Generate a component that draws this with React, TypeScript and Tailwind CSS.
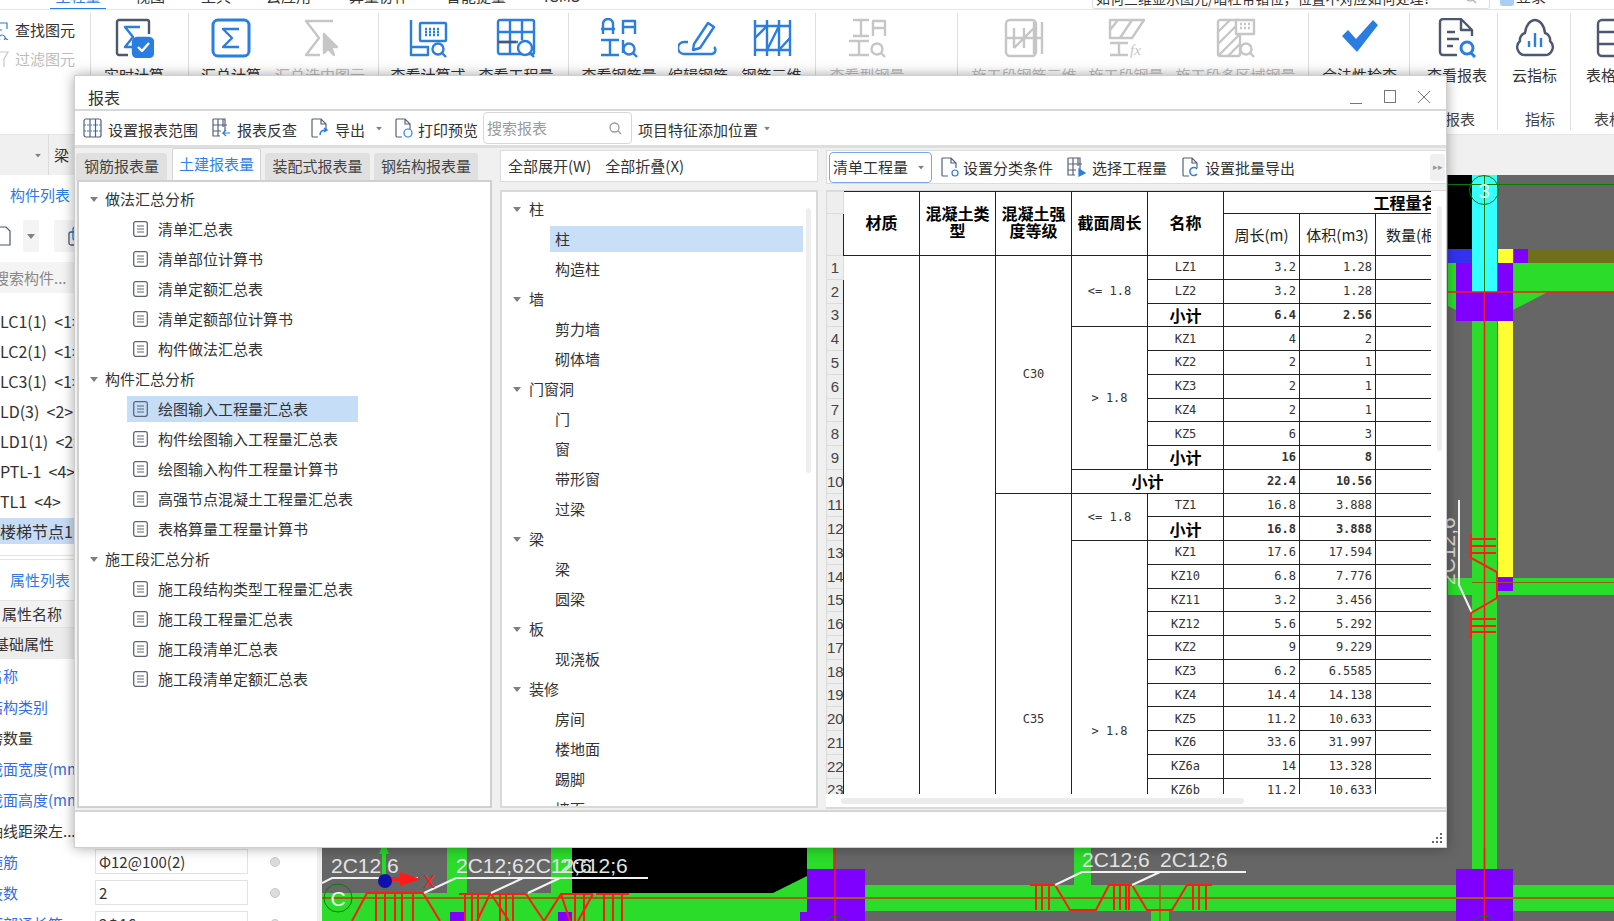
import type { ReactNode } from "react";

const BLUE = "#2a7de1";
const GRAY = "#c6c6c6";
const SLATE = "#4b5870";

/* 40x40 ribbon pictogram */
function Glyph({ children, color = BLUE }: { children: ReactNode; color?: string }) {
  return (
    <svg width="40" height="40" viewBox="0 0 40 40" fill="none" stroke={color} strokeWidth="2.4" strokeLinejoin="round">
      {children}
    </svg>
  );
}

const MiniLens = ({ c = BLUE }: { c?: string }) => (
  <>
    <circle cx="30" cy="31" r="5.5" stroke={c} />
    <path d="M34 35l4 4" stroke={c} />
  </>
);

const ribbonGlyphs: Record<string, ReactNode> = {
  live: (
    <Glyph color={SLATE}>
      <path d="M14 37H5a2 2 0 0 1-2-2V4a2 2 0 0 1 2-2h28a2 2 0 0 1 2 2v12" />
      <path d="M26 9H11l8 10-8 10h9" stroke={BLUE} />
      <rect x="19" y="20" width="20" height="19" rx="4" fill={BLUE} stroke={BLUE} />
      <path d="M24 29l4 4 7-8" stroke="#fff" />
    </Glyph>
  ),
  sum: (
    <Glyph>
      <rect x="2" y="2" width="36" height="36" rx="5" strokeWidth="3" />
      <path d="M28 11H12l9 9-9 9h16" />
    </Glyph>
  ),
  sumPart: (
    <Glyph color={GRAY}>
      <path d="M33 3H6l13 17L6 37h14" />
      <path d="M24 16l13 13h-6l3 8-6-6-4 4z" fill={GRAY} />
    </Glyph>
  ),
  formula: (
    <Glyph>
      <path d="M3 2v35h17v-8H3" />
      <rect x="12" y="5" width="26" height="18" rx="1" />
      <path d="M17 11h16M17 14h16M17 17h16" strokeDasharray="2 2" />
      <MiniLens />
    </Glyph>
  ),
  quantity: (
    <Glyph>
      <rect x="2" y="2" width="36" height="34" rx="2" />
      <path d="M2 14h36M2 24h20M14 2v34M26 2v20" stroke={BLUE} />
      <path d="M2 24h18" stroke={SLATE} />
      <circle cx="29" cy="30" r="7" fill="#fff" />
      <path d="M34 35l4 4" />
    </Glyph>
  ),
  steel: (
    <Glyph>
      <path d="M4 16V6a5 5 0 0 1 10 0v10M2 11h14M24 16V3h12v13M24 9h12M2 22h18M11 22v15M2 37h18M24 22v13" />
      <MiniLens />
    </Glyph>
  ),
  edit: (
    <Glyph>
      <path d="M16 26L30 5l6 4-14 21-7 2z" />
      <path d="M10 24H6a5 5 0 0 0 0 12h28a4 4 0 0 0 2-7" />
    </Glyph>
  ),
  rebar3d: (
    <Glyph>
      <path d="M3 2v36M15 2v36M27 2v36M38 2v36M3 8h35M3 32h35" />
      <path d="M3 20l12-12M27 32l11-12M15 32l12-24" />
    </Glyph>
  ),
  shape: (
    <Glyph color={GRAY}>
      <path d="M6 2h16M14 2v16M6 18h16M26 18V3h12v15M26 10h12M2 23h20M12 23v14M2 37h20" />
      <MiniLens c={GRAY} />
    </Glyph>
  ),
  segRebar: (
    <Glyph color={GRAY}>
      <rect x="2" y="2" width="30" height="36" rx="4" />
      <path d="M2 20h36M10 10v20M20 10v20M30 4v32M38 4v32M10 30l20-20" />
    </Glyph>
  ),
  segSteel: (
    <Glyph color={GRAY}>
      <path d="M4 2h34L26 20H4zM14 20L26 2M4 12l8-10" />
      <path d="M4 25h18M13 25v12M4 37h18" />
      <text x="24" y="37" fontSize="15" fontStyle="italic" fill={GRAY} stroke="none" fontFamily="Liberation Serif, serif">fx</text>
    </Glyph>
  ),
  segArea: (
    <Glyph color={GRAY}>
      <rect x="2" y="2" width="22" height="36" rx="2" />
      <path d="M2 14L14 2M2 26L24 4M2 38l22-22M12 38l12-12" />
      <rect x="20" y="2" width="18" height="14" fill="#fff" />
      <path d="M24 6h10M24 10h10" strokeDasharray="2 2" />
      <MiniLens c={GRAY} />
    </Glyph>
  ),
  check: (
    <svg width="40" height="40" viewBox="0 0 40 40" fill={BLUE}>
      <path d="M2 18l6-6 8 9L33 2l5 5-21 27z" />
    </svg>
  ),
  report: (
    <Glyph color={SLATE}>
      <path d="M20 37H6a3 3 0 0 1-3-3V4a3 3 0 0 1 3-3h18l11 11v6M24 1v11h11" />
      <path d="M10 14h8M10 21h12M10 28h6" />
      <circle cx="30" cy="30" r="6" stroke={BLUE} strokeWidth="3" />
      <path d="M34 35l4 4" stroke={BLUE} strokeWidth="3" />
    </Glyph>
  ),
  cloud: (
    <Glyph color={SLATE}>
      <path d="M11 37a8 8 0 0 1-6-14 7 7 0 0 1 5-8C11 6 16 2 20 2s9 4 10 13a7 7 0 0 1 5 8 8 8 0 0 1-6 14z" />
      <path d="M14 23v6M20 15v14M26 20v9" stroke={BLUE} />
    </Glyph>
  ),
  table: (
    <Glyph color={SLATE}>
      <rect x="2" y="2" width="36" height="36" rx="4" />
      <path d="M2 14h36M2 26h36M20 2v36" />
    </Glyph>
  ),
};

const ribbonGroups = [
  { w: 98, items: [{ w: 86, g: "live", t: "实时计算" }] },
  {
    w: 190,
    items: [
      { w: 84, g: "sum", t: "汇总计算" },
      { w: 94, g: "sumPart", t: "汇总选中图元", off: true },
    ],
  },
  {
    w: 190,
    items: [
      { w: 98, g: "formula", t: "查看计算式" },
      { w: 78, g: "quantity", t: "查看工程量" },
    ],
  },
  {
    w: 247,
    items: [
      { w: 100, g: "steel", t: "查看钢筋量" },
      { w: 58, g: "edit", t: "编辑钢筋" },
      { w: 89, g: "rebar3d", t: "钢筋三维" },
    ],
  },
  { w: 142, items: [{ w: 102, g: "shape", t: "查看型钢量", off: true }] },
  {
    w: 351,
    items: [
      { w: 132, g: "segRebar", t: "施工段钢筋三维", off: true },
      { w: 72, g: "segSteel", t: "施工段钢量", off: true },
      { w: 147, g: "segArea", t: "施工段多区域钢量", off: true },
    ],
  },
  { w: 101, items: [{ w: 101, g: "check", t: "合法性检查" }] },
  { w: 88, label: "报表", pl: 35, items: [{ w: 94, g: "report", t: "查看报表" }] },
  { w: 73, label: "指标", pl: 27, items: [{ w: 73, g: "cloud", t: "云指标" }] },
  { w: 90, label: "表格", pl: 23, items: [{ w: 90, g: "table", t: "表格算量" }] },
];

const memberRows = ["LC1(1) <1>", "LC2(1) <1>", "LC3(1) <1>", "LD(3) <2>", "LD1(1) <2>", "PTL-1 <4>", "TL1 <4>", "楼梯节点1"];

const propRows = [
  { n: "名称", blue: true },
  { n: "结构类别", blue: true },
  { n: "跨数量" },
  { n: "截面宽度(mm)", blue: true },
  { n: "截面高度(mm)", blue: true },
  { n: "轴线距梁左边线距离", short: "轴线距梁左..." },
  { n: "箍筋", blue: true, v: "Φ12@100(2)" },
  { n: "肢数", blue: true, v: "2" },
  { n: "下部通长筋", blue: true, v: "2Φ16" },
];

const reportTree = [
  { g: "做法汇总分析", items: ["清单汇总表", "清单部位计算书", "清单定额汇总表", "清单定额部位计算书", "构件做法汇总表"] },
  { g: "构件汇总分析", items: ["绘图输入工程量汇总表", "构件绘图输入工程量汇总表", "绘图输入构件工程量计算书", "高强节点混凝土工程量汇总表", "表格算量工程量计算书"] },
  { g: "施工段汇总分析", items: ["施工段结构类型工程量汇总表", "施工段工程量汇总表", "施工段清单汇总表", "施工段清单定额汇总表"] },
];

const memberTree = [
  { g: "柱", items: ["柱", "构造柱"] },
  { g: "墙", items: ["剪力墙", "砌体墙"] },
  { g: "门窗洞", items: ["门", "窗", "带形窗", "过梁"] },
  { g: "梁", items: ["梁", "圆梁"] },
  { g: "板", items: ["现浇板"] },
  { g: "装修", items: ["房间", "楼地面", "踢脚", "墙面"] },
];

const tableRows: { name?: string; a?: string; b?: string; bold?: boolean }[] = [
  { name: "LZ1", a: "3.2", b: "1.28" },
  { name: "LZ2", a: "3.2", b: "1.28" },
  { name: "小计", a: "6.4", b: "2.56", bold: true },
  { name: "KZ1", a: "4", b: "2" },
  { name: "KZ2", a: "2", b: "1" },
  { name: "KZ3", a: "2", b: "1" },
  { name: "KZ4", a: "2", b: "1" },
  { name: "KZ5", a: "6", b: "3" },
  { name: "小计", a: "16", b: "8", bold: true },
  { name: "小计", a: "22.4", b: "10.56", bold: true },
  { name: "TZ1", a: "16.8", b: "3.888" },
  { name: "小计", a: "16.8", b: "3.888", bold: true },
  { name: "KZ1", a: "17.6", b: "17.594" },
  { name: "KZ10", a: "6.8", b: "7.776" },
  { name: "KZ11", a: "3.2", b: "3.456" },
  { name: "KZ12", a: "5.6", b: "5.292" },
  { name: "KZ2", a: "9", b: "9.229" },
  { name: "KZ3", a: "6.2", b: "6.5585" },
  { name: "KZ4", a: "14.4", b: "14.138" },
  { name: "KZ5", a: "11.2", b: "10.633" },
  { name: "KZ6", a: "33.6", b: "31.997" },
  { name: "KZ6a", a: "14", b: "13.328" },
  { name: "KZ6b", a: "11.2", b: "10.633" },
  {},
  {},
  {},
  {},
  {},
  {},
];

function Caret({ className = "" }: { className?: string }) {
  return (
    <svg width="8" height="5" viewBox="0 0 8 5" className={`shrink-0 ${className}`}>
      <path d="M0 0h8L4 5z" fill="#808080" />
    </svg>
  );
}

function DocIcon() {
  return (
    <svg width="15" height="16" viewBox="0 0 15 16" fill="none" stroke="#5f6673" className="shrink-0">
      <rect x=".7" y=".7" width="13.600" height="14.600" rx="2" strokeWidth="1.300" />
      <path d="M4 5h7M4 8h7M4 11h7" />
    </svg>
  );
}

/* small dialog toolbar pictograms */
function ToolGrid({ accent }: { accent: ReactNode }) {
  return (
    <svg width="20" height="20" viewBox="0 0 20 20" fill="none" stroke="#56617a" strokeWidth="1.200" className="shrink-0">
      <path d="M2 1h12v12M2 1v17h7M2 7h14M2 13h8M7 1v17M12 1v8" />
      {accent}
    </svg>
  );
}

function ToolDoc({ accent }: { accent: ReactNode }) {
  return (
    <svg width="20" height="20" viewBox="0 0 20 20" fill="none" stroke="#56617a" strokeWidth="1.200" className="shrink-0">
      <path d="M9 19H4a1 1 0 0 1-1-1V2a1 1 0 0 1 1-1h8l5 5v5M12 1v5h5" />
      {accent}
    </svg>
  );
}

const CAD_GREEN = "#2bdc2b";
const CAD_PURPLE = "#8000ff";

function Leader({ d }: { d: string }) {
  return <path d={d} stroke="#f2f2f2" strokeWidth="2" fill="none" />;
}

function CadLabel({ x, y }: { x: number; y: number }) {
  return (
    <text x={x} y={y} fontSize="21" fill="#e4e4e4" fontFamily="Liberation Sans, sans-serif">
      2C12;6
    </text>
  );
}

function CadCanvas() {
  return (
    <svg width="1292" height="746" className="block">
      <g transform="translate(-322 -175)">
        {/* right column */}
        <rect x="1448" y="175" width="24" height="74" fill="#000" />
        <rect x="1472" y="175" width="25" height="117" fill="#33ffff" />
        <rect x="1448" y="249" width="24" height="14" fill="#3333ee" />
        <rect x="1498" y="249" width="15" height="14" fill="#ffff33" />
        <rect x="1514" y="249" width="14" height="14" fill={CAD_PURPLE} />
        <rect x="1528" y="249" width="86" height="14" fill="#70701c" />
        <path d="M1448 263h8v47l-8-4z" fill={CAD_GREEN} />
        <rect x="1513" y="263" width="101" height="29" fill={CAD_GREEN} />
        <path d="M1513 292h35l-35 18z" fill={CAD_GREEN} />
        <rect x="1456" y="263" width="16" height="29" fill={CAD_PURPLE} />
        <rect x="1498" y="263" width="15" height="29" fill={CAD_PURPLE} />
        <rect x="1456" y="292" width="57" height="29" fill={CAD_PURPLE} />
        <rect x="1472" y="321" width="25" height="600" fill={CAD_GREEN} />
        <rect x="1498" y="321" width="15" height="256" fill="#ffff33" />
        <rect x="1448" y="578" width="24" height="17" fill={CAD_GREEN} />
        <rect x="1497" y="578" width="117" height="17" fill={CAD_GREEN} />
        <rect x="1498" y="577" width="15" height="14" fill={CAD_PURPLE} />
        <path d="M1448 184.500h166" stroke="#0a7a0a" />
        <path d="M1484.500 175v117" stroke="#0a7a0a" />
        <circle cx="1484" cy="190" r="14.500" stroke="#0a7a0a" fill="none" />
        <text x="1484" y="198" textAnchor="middle" fontSize="21" fill="#eaffff" fontFamily="Liberation Sans, sans-serif">3</text>
        <path d="M1448 292h166" stroke="#ff1a1a" strokeWidth="1.500" />
        <path d="M1484.500 292v629" stroke="#ff1a1a" strokeWidth="1.500" />
        <path d="M1472 582.500h142" stroke="#9a5a1a" />
        <Leader d="M1459 500v85l13 28" />
        <text transform="rotate(-90 1455 585)" x="1455" y="585" fontSize="21" fill="#d8d8d8" fontFamily="Liberation Sans, sans-serif">2C12;6</text>
        <g stroke="#ff1a1a" strokeWidth="2" fill="none">
          <path d="M1471 534v24l26 14v26l-26 15v26" />
          <path d="M1471 539h25M1471 546h25M1471 553h25M1471 619h25M1471 626h25M1471 632h25" />
        </g>

        {/* bottom strip, left part */}
        <rect x="447" y="848" width="20" height="46" fill={CAD_GREEN} />
        <rect x="551" y="848" width="21" height="46" fill={CAD_GREEN} />
        <rect x="572" y="848" width="235" height="46" fill="#000" />
        <rect x="322" y="893" width="485" height="28" fill={CAD_GREEN} />
        <path d="M771 894l36-18v18z" fill={CAD_GREEN} />
        <rect x="807" y="848" width="26" height="21" fill={CAD_GREEN} />
        <rect x="807" y="869" width="58" height="52" fill={CAD_PURPLE} />
        <rect x="800" y="912" width="7" height="9" fill={CAD_PURPLE} />
        <rect x="450" y="912" width="14" height="9" fill={CAD_PURPLE} />
        <rect x="558" y="912" width="14" height="9" fill={CAD_PURPLE} />
        <path d="M865 885h591v26H865z" fill={CAD_GREEN} />
        <rect x="1513" y="885" width="101" height="26" fill={CAD_GREEN} />
        <rect x="1074" y="848" width="17" height="37" fill={CAD_GREEN} />
        <rect x="1151" y="911" width="18" height="10" fill={CAD_GREEN} />
        <rect x="1456" y="869" width="57" height="52" fill={CAD_PURPLE} />
        <path d="M322 898h1292" stroke="#a0601a" strokeWidth="2" />
        <path d="M835 848v73M1484.500 848v73" stroke="#ff1a1a" strokeWidth="1.500" />
        <path d="M1160 885v36" stroke="#a0601a" strokeWidth="1.500" />
        <circle cx="835" cy="928" r="12" stroke="#0a7a0a" fill="none" />
        <circle cx="1484" cy="928" r="12" stroke="#0a7a0a" fill="none" />

        <g stroke="#ff1a1a" strokeWidth="2" fill="none">
          <path d="M352 921l15-28h56l17 28M376 893v28M385 893v28M395 893v28M402 893v28M413 893v28" />
          <path d="M459 894h67M465 894v27M472 894v27M478 894v27M490 894l-13 27M491 894l18 27M500 894v27M506 894v27M513 894v27M526 894l18 27" />
          <path d="M544 921l17-27h32M570 921l-9-27M575 894v27M584 894v27M593 894l-15 27M596 894h33M604 894v27M613 894v27M622 894v27" />
          <path d="M1030 885h25l15 25h26l13-25h23M1036 885v25M1042 885v25M1049 885v25M1114 885v25M1120 885v25M1126 885v25M1129 885v25" />
          <path d="M1132 885l15 25h25l15-25h25M1193 885v25M1199 885v25M1206 885v25" />
        </g>

        <CadLabel x={331} y={873} />
        <CadLabel x={456} y={873} />
        <CadLabel x={524} y={873} />
        <CadLabel x={560} y={873} />
        <CadLabel x={1082} y={867} />
        <CadLabel x={1160} y={867} />
        <Leader d="M322 883l10-5h86M424 893l32-15h192M491 893l32-15M528 893l32-15" />
        <Leader d="M1055 885l27-13h164M1132 885l28-13" />

        {/* axis gizmo and grid bubble */}
        <path d="M384 878v-28" stroke="#22dd22" strokeWidth="4" />
        <path d="M384 842l-5 12h10z" fill="#22dd22" />
        <path d="M384 879h22" stroke="#ff1a1a" strokeWidth="4" />
        <path d="M400 872l21 7-21 7z" fill="#ff1a1a" />
        <circle cx="385" cy="881" r="7" fill="#1010b0" />
        <text x="423" y="888" fontSize="18" fill="#ff1a1a" fontFamily="Liberation Sans, sans-serif">X</text>
        <circle cx="338" cy="898" r="14" stroke="#0a7a0a" fill="none" />
        <text x="338" y="906" textAnchor="middle" fontSize="21" fill="#e8ffe8" fontFamily="Liberation Sans, sans-serif">C</text>
      </g>
    </svg>
  );
}

function Ribbon() {
  return (
    <div className="flex h-[125px] border-b border-[#e6e6e6] bg-white">
      <div className="flex w-[90px] shrink-0 flex-col gap-[9px] pt-[10px] text-[15px] leading-[20px]">
        <div className="flex items-center gap-[6px] text-[#333]">
          <svg width="9" height="20" viewBox="0 0 9 20" fill="none" stroke={BLUE} strokeWidth="1.200" className="shrink-0">
            <path d="M0 3h7v6M0 10h2M2 15a3 3 0 1 0 .1 0M5 18l3 2" />
          </svg>
          查找图元
        </div>
        <div className="flex items-center gap-[6px] text-[#bdbdbd]">
          <svg width="9" height="20" viewBox="0 0 9 20" fill="none" stroke="#c8c8c8" strokeWidth="1.200" className="shrink-0">
            <path d="M0 3h8L4 10v8" />
          </svg>
          过滤图元
        </div>
      </div>
      {ribbonGroups.map((group) => (
        <div key={group.items[0].t} className="relative mt-[3px] h-[117px] shrink-0 border-l border-[#dedede]" style={{ width: group.w }}>
          <div className="flex">
            {group.items.map((item) => (
              <div key={item.t} className="flex shrink-0 flex-col items-center pt-[5px]" style={{ width: item.w }}>
                {ribbonGlyphs[item.g]}
                <span className={`mt-[7px] whitespace-nowrap text-[15px] leading-[20px] ${item.off ? "text-[#bdbdbd]" : "text-[#333]"}`}>{item.t}</span>
              </div>
            ))}
          </div>
          {group.label && (
            <div className="mt-[24px] text-[15px] leading-[20px] text-[#444]" style={{ paddingLeft: group.pl }}>
              {group.label}
            </div>
          )}
        </div>
      ))}
    </div>
  );
}

function TopTabs() {
  const tabs = [
    { t: "工程量", w: 56, ml: 50, on: true },
    { t: "视图", w: 30, ml: 29 },
    { t: "工具", w: 32, ml: 35 },
    { t: "云应用", w: 44, ml: 34 },
    { t: "算量协作", w: 66, ml: 36 },
    { t: "智能提量", w: 64, ml: 32 },
    { t: "IGMS", w: 44, ml: 32 },
  ];
  return (
    <div className="flex h-[10px] overflow-hidden border-b border-[#e4e4e4] bg-white">
      {tabs.map((tab) => (
        <div
          key={tab.t}
          className={`-mt-[14px] h-[24px] shrink-0 whitespace-nowrap text-center text-[15px] leading-[20px] ${tab.on ? "border-b-2 border-[#2a7de1] text-[#2a7de1]" : "text-[#333]"}`}
          style={{ width: tab.w, marginLeft: tab.ml }}
        >
          {tab.t}
        </div>
      ))}
      <div className="-mt-[13px] ml-[508px] flex h-[22px] w-[398px] shrink-0 items-center justify-between rounded-[3px] border border-[#ddd] pl-[3px] pr-[12px] text-[14px] text-[#333]">
        <span className="truncate">如何三维显示图元/暗柱带错位，位置不对应如何处理?</span>
        <svg width="12" height="12" viewBox="0 0 12 12" fill="none" stroke="#aaa" strokeWidth="1.200" className="shrink-0">
          <circle cx="5" cy="5" r="4" />
          <path d="M8 8l3 3" />
        </svg>
      </div>
      <div className="-mt-[8px] ml-[10px] h-[14px] w-[14px] shrink-0 rounded-[3px] bg-[#a9cdf5]" />
      <div className="-mt-[14px] ml-[2px] h-[24px] whitespace-nowrap text-[15px] leading-[20px] text-[#333]">登录</div>
    </div>
  );
}

function Sidebar() {
  return (
    <div className="flex w-[322px] shrink-0 flex-col overflow-hidden border-r-[5px] border-[#efefef] bg-white text-[15px] leading-[20px]">
      <div className="flex h-[45px] shrink-0 items-center pb-[5px] pl-[10px] text-[#2a7de1]">构件列表</div>
      <div className="flex h-[32px] shrink-0 items-center gap-[2px]">
        <div className="flex h-[32px] w-[21px] items-center">
          <svg width="11" height="20" viewBox="0 0 11 20" fill="none" stroke="#4b5870" strokeWidth="1.200">
            <path d="M0 1h6l4 4v14H0" />
          </svg>
        </div>
        <div className="flex h-[32px] w-[16px] items-center justify-center rounded-[2px] bg-[#f4f4f4]">
          <Caret />
        </div>
        <div className="ml-[13px] flex h-[32px] w-[30px] items-center justify-end rounded-[2px] bg-[#f4f4f4]">
          <svg width="16" height="20" viewBox="0 0 16 20" fill="none" strokeWidth="1.300">
            <rect x="1" y="6" width="11" height="13" rx="2" stroke="#4b5870" />
            <rect x="5" y="1" width="11" height="13" rx="2" stroke={BLUE} />
          </svg>
        </div>
      </div>
      <div className="mt-[10px] flex h-[31px] shrink-0 items-center bg-[#f4f4f4] text-[#888]">
        <span className="-ml-[6px]">搜索构件...</span>
      </div>
      <div className="mt-[13px] flex flex-col">
        {memberRows.map((row, i) => (
          <div key={row} className="flex h-[30px] items-center">
            <div className={`flex h-[26px] w-full items-center whitespace-pre text-[16px] text-[#333] ${i === 7 ? "bg-[#c7dcf6]" : ""}`}>
              {row.replace(" ", "  ")}
            </div>
          </div>
        ))}
      </div>
      <div className="mt-[9px] h-[5px] shrink-0 border-y border-[#e4e4e4]" />
      <div className="flex h-[40px] shrink-0 items-center pl-[10px] text-[#2a7de1]">属性列表</div>
      <div className="flex h-[28px] shrink-0 items-center border-y border-[#e4e4e4] bg-[#f2f2f2] pl-[2px] text-[#333]">属性名称</div>
      <div className="flex h-[31px] shrink-0 items-center bg-[#ececec] text-[#333]">
        <span className="-ml-[6px]">基础属性</span>
      </div>
      <div className="flex flex-col pt-[1px]">
        {propRows.map((row) => (
          <div key={row.n} className="flex h-[31px] shrink-0 items-center">
            <span className={`-ml-[12px] w-[107px] shrink-0 overflow-hidden whitespace-nowrap ${row.blue ? "text-[#2f6fe6]" : "text-[#333]"}`}>{row.short ?? row.n}</span>
            <div className="flex h-[25px] w-[153px] shrink-0 items-center border border-[#e2e2e2] pl-[3px] text-[#333]">{row.v}</div>
            <span className="ml-[22px] h-[10px] w-[10px] rounded-full border border-[#c8c8c8] bg-[#dcdcdc]" />
          </div>
        ))}
      </div>
    </div>
  );
}

function ReportDialog() {
  const headCell = "border border-[#222] px-[2px] text-center align-middle font-bold text-[16px] leading-[17px] text-black";
  const bodyCell = "border border-[#222] p-0 text-center align-middle whitespace-nowrap";
  const rowHead = "border border-[#dcdcdc] bg-[#eeeeee] p-0 text-center text-[15px] leading-none text-[#444] [font-family:'Liberation_Sans',sans-serif]";
  const mono = "[font-family:'DejaVu_Sans_Mono',monospace] text-[12px] leading-none";
  const unitCell = "border border-[#222] text-center align-middle text-[15px] text-[#222] whitespace-nowrap";

  return (
    <div className="absolute left-[74px] top-[75px] flex h-[773px] w-[1373px] flex-col border border-[#cfcfcf] bg-white shadow-[0_0_12px_rgba(0,0,0,0.35)]">
      {/* title bar */}
      <div className="flex h-[35px] shrink-0 items-center border-b-2 border-[#d5d8dc] pl-[13px] pr-[15px] pt-[9px] text-[16px] text-[#333]">
        <span>报表</span>
        <div className="ml-auto flex items-center gap-[20px] text-[#666]">
          <svg width="14" height="14" viewBox="0 0 14 14" stroke="#777"><path d="M1 13.500h12" /></svg>
          <svg width="14" height="14" viewBox="0 0 14 14" fill="none" stroke="#777"><rect x="1.500" y=".5" width="11" height="12" /></svg>
          <svg width="14" height="14" viewBox="0 0 14 14" stroke="#777"><path d="M1 1l12 12M13 1L1 13" /></svg>
        </div>
      </div>

      {/* report toolbar */}
      <div className="flex h-[37px] shrink-0 items-center border-b-[3px] border-[#dedede] pl-[8px] text-[15px] text-[#333] [&>span]:pt-[5px]">
        <svg width="19" height="20" viewBox="0 0 19 20" fill="none" stroke="#56617a" strokeWidth="1.200" className="shrink-0">
          <rect x="1" y="1" width="17" height="18" rx="2" />
          <path d="M7 1v18M12.500 1v18" />
          <path d="M1 7h17M1 13h17" stroke={BLUE} strokeDasharray="2 1" />
        </svg>
        <span className="ml-[6px]">设置报表范围</span>
        <div className="ml-[13px]">
          <ToolGrid accent={<path d="M19 15h-7l3-3M12 15l3 3" stroke={BLUE} />} />
        </div>
        <span className="ml-[6px]">报表反查</span>
        <div className="ml-[12px]">
          <ToolDoc accent={<path d="M11 17c0-4 2-5 6-5M15 10l3 2-3 2" stroke={BLUE} strokeWidth="1.500" />} />
        </div>
        <span className="ml-[6px]">导出</span>
        <Caret className="ml-[10px] scale-75" />
        <div className="ml-[10px]">
          <ToolDoc accent={<circle cx="15" cy="15" r="4" stroke={BLUE} />} />
        </div>
        <span className="ml-[5px]">打印预览</span>
        <div className="ml-[5px] flex h-[32px] w-[149px] shrink-0 items-center justify-between rounded-[4px] border border-[#d8d8d8] pl-[3px] pr-[9px] text-[#9a9a9a]">
          <span>搜索报表</span>
          <svg width="13" height="13" viewBox="0 0 13 13" fill="none" stroke="#999" strokeWidth="1.300">
            <circle cx="5.500" cy="5.500" r="4.500" />
            <path d="M9 9l3 3" />
          </svg>
        </div>
        <span className="ml-[6px]">项目特征添加位置</span>
        <Caret className="ml-[5px] scale-75" />
      </div>

      {/* body */}
      <div className="flex min-h-0 flex-1 bg-[#f0f0f0] text-[15px] leading-[20px] text-[#333]">
        {/* report list */}
        <div className="flex w-[425px] shrink-0 flex-col">
          <div className="flex h-[32px] shrink-0 items-end text-center">
            <div className="ml-[1px] h-[27px] w-[91px] rounded-t-[3px] bg-[#e0e0e0] leading-[25px] text-[#444]">钢筋报表量</div>
            <div className="ml-[5px] h-[32px] w-[89px] rounded-t-[3px] border border-b-0 border-[#d5d5d5] bg-white leading-[30px] text-[#2a86ea]">土建报表量</div>
            <div className="ml-[4px] h-[27px] w-[105px] rounded-t-[3px] bg-[#e0e0e0] leading-[25px] text-[#444]">装配式报表量</div>
            <div className="ml-[4px] h-[27px] w-[104px] rounded-t-[3px] bg-[#e0e0e0] leading-[25px] text-[#444]">钢结构报表量</div>
          </div>
          <div className="ml-[2px] mr-[8px] flex h-[628px] flex-col border-2 border-[#d0d0d0] bg-white pt-[2px]">
            {reportTree.map((group) => (
              <div key={group.g}>
                <div className="flex h-[30px] items-center pl-[11px]">
                  <Caret />
                  <span className="ml-[7px]">{group.g}</span>
                </div>
                {group.items.map((item) => (
                  <div key={item} className="flex h-[30px] items-center pl-[48px]">
                    <div className={`flex h-[26px] w-[231px] shrink-0 items-center gap-[10px] whitespace-nowrap pl-[6px] ${item === "绘图输入工程量汇总表" ? "bg-[#c6ddf8]" : ""}`}>
                      <DocIcon />
                      <span>{item}</span>
                    </div>
                  </div>
                ))}
              </div>
            ))}
          </div>
        </div>

        {/* member tree */}
        <div className="flex w-[326px] shrink-0 flex-col pr-[8px]">
          <div className="mt-[2px] flex h-[32px] shrink-0 items-center gap-[14px] border border-[#dcdcdc] bg-white pl-[7px]">
            <span>全部展开(W)</span>
            <span>全部折叠(X)</span>
          </div>
          <div className="relative mt-[8px] h-[618px] overflow-hidden border-2 border-[#d9d9d9] bg-white pt-[2px]">
            {memberTree.map((group) => (
              <div key={group.g}>
                <div className="flex h-[30px] items-center pl-[11px]">
                  <Caret />
                  <span className="ml-[8px]">{group.g}</span>
                </div>
                {group.items.map((item, i) => (
                  <div key={item + i} className="flex h-[30px] items-center pl-[48px]">
                    <div className={`flex h-[26px] w-[253px] items-center pl-[5px] ${group.g === "柱" && i === 0 ? "bg-[#c9dff8]" : ""}`}>{item}</div>
                  </div>
                ))}
              </div>
            ))}
            <div className="absolute right-[5px] top-[16px] h-[265px] w-[5px] rounded-full bg-[#eeeeee]" />
          </div>
        </div>

        {/* preview */}
        <div className="flex min-w-0 flex-1 flex-col">
          <div className="mt-[2px] flex h-[34px] shrink-0 items-center border border-r-0 border-[#dcdcdc] bg-white pl-[2px] [&>span]:pt-[2px]">
            <div className="flex h-[31px] w-[103px] shrink-0 items-center rounded-[4px] border border-[#7aa7e6] pl-[3px]">
              <span>清单工程量</span>
              <Caret className="ml-[9px] scale-75" />
            </div>
            <div className="ml-[7px]">
              <ToolDoc accent={<circle cx="16" cy="16" r="3" stroke={BLUE} />} />
            </div>
            <span className="ml-[4px]">设置分类条件</span>
            <div className="ml-[13px]">
              <ToolGrid accent={<path d="M13 12l6 4-6 3z" fill={BLUE} stroke={BLUE} />} />
            </div>
            <span className="ml-[6px]">选择工程量</span>
            <div className="ml-[13px]">
              <ToolDoc accent={<path d="M17 12a4 4 0 1 0 0 5" stroke={BLUE} strokeWidth="1.500" />} />
            </div>
            <span className="ml-[5px]">设置批量导出</span>
            <div className="ml-auto mr-[1px] flex h-[27px] w-[15px] items-center justify-center rounded-[3px] bg-[#f0f0f0] text-[9px] text-[#999]">▸▸</div>
          </div>
          <div className="relative mt-[6px] h-[619px] border-b-2 border-t border-[#d9d9d9] bg-white">
            <div className="h-[603px] w-[605px] overflow-hidden">
              <table className="w-[777px] table-fixed border-collapse">
                <colgroup>
                  <col className="w-[17px]" />
                  {Array.from({ length: 10 }, (_, i) => (
                    <col key={i} className="w-[76px]" />
                  ))}
                </colgroup>
                <thead>
                  <tr className="h-[22px]">
                    <th className={rowHead} />
                    <th rowSpan={2} className={`${headCell} pb-[3px]`}>材质</th>
                    <th rowSpan={2} className={`${headCell} pb-[3px]`}>混凝土类型</th>
                    <th rowSpan={2} className={`${headCell} pb-[3px]`}>混凝土强度等级</th>
                    <th rowSpan={2} className={`${headCell} pb-[3px]`}>截面周长</th>
                    <th rowSpan={2} className={`${headCell} pb-[3px]`}>名称</th>
                    <th colSpan={5} className={headCell}>工程量名称</th>
                  </tr>
                  <tr className="h-[42px]">
                    <th className={rowHead} />
                    <td className={unitCell}>周长(m)</td>
                    <td className={unitCell}>体积(m3)</td>
                    <td className={unitCell}>数量(根)</td>
                    <td className="border border-[#222]" />
                    <td className="border border-[#222]" />
                  </tr>
                </thead>
                <tbody>
                  {tableRows.map((row, i) => {
                    const n = i + 1;
                    const wide = n === 10 || n === 29;
                    return (
                      <tr key={n} className="h-[23.75px]">
                        <td className={rowHead}>{n}</td>
                        {n === 1 && <td rowSpan={29} className={bodyCell} />}
                        {n === 1 && <td rowSpan={29} className={bodyCell} />}
                        {n === 1 && <td rowSpan={10} className={`${bodyCell} ${mono}`}>C30</td>}
                        {n === 11 && <td rowSpan={19} className={`${bodyCell} ${mono}`}>C35</td>}
                        {n === 1 && <td rowSpan={3} className={`${bodyCell} ${mono}`}>{"<= 1.8"}</td>}
                        {n === 4 && <td rowSpan={6} className={`${bodyCell} ${mono}`}>{"> 1.8"}</td>}
                        {n === 11 && <td rowSpan={2} className={`${bodyCell} ${mono}`}>{"<= 1.8"}</td>}
                        {n === 13 && <td rowSpan={16} className={`${bodyCell} ${mono}`}>{"> 1.8"}</td>}
                        <td
                          colSpan={wide ? 2 : 1}
                          className={`${bodyCell} ${row.bold ? "text-[16px] font-bold leading-none text-black" : mono}`}
                        >
                          {row.name}
                        </td>
                        {[row.a, row.b].map((v, j) => (
                          <td key={j} className={`${bodyCell} pr-[3px] !text-right ${mono} ${row.bold ? "font-bold" : ""}`}>{v}</td>
                        ))}
                        <td className={bodyCell} />
                        <td className={bodyCell} />
                        <td className={bodyCell} />
                      </tr>
                    );
                  })}
                </tbody>
              </table>
            </div>
            <div className="absolute left-[15px] top-[607px] h-[6px] w-[403px] rounded-full bg-[#ececec]" />
            <div className="absolute left-[611px] top-[15px] h-[245px] w-[5px] rounded-full bg-[#eeeeee]" />
          </div>
        </div>
      </div>

      {/* status bar */}
      <div className="flex h-[37px] shrink-0 items-end justify-end border-t-2 border-[#d5d5d5] bg-white pb-[2px] pr-[2px]">
        <svg width="12" height="12" viewBox="0 0 12 12" fill="#666">
          <rect x="8" y="0" width="2" height="2" />
          <rect x="4" y="4" width="2" height="2" />
          <rect x="8" y="4" width="2" height="2" />
          <rect x="0" y="8" width="2" height="2" />
          <rect x="4" y="8" width="2" height="2" />
          <rect x="8" y="8" width="2" height="2" />
        </svg>
      </div>
    </div>
  );
}

export default function App() {
  return (
    <div className="relative flex h-[921px] w-[1614px] flex-col overflow-hidden bg-white text-[15px] text-[#333] [font-family:'Noto_Sans_CJK_SC','Liberation_Sans',sans-serif]">
      <TopTabs />
      <Ribbon />
      <div className="flex h-[40px] shrink-0 items-center bg-[#f0f0f0]">
        <Caret className="ml-[34px] scale-75" />
        <div className="ml-[6px] flex h-[40px] items-center border-l border-[#dcdcdc] pl-[5px]">梁</div>
      </div>
      <div className="flex min-h-0 flex-1">
        <Sidebar />
        <div className="min-w-0 flex-1 bg-[#666666]">
          <CadCanvas />
        </div>
      </div>
      <ReportDialog />
    </div>
  );
}
